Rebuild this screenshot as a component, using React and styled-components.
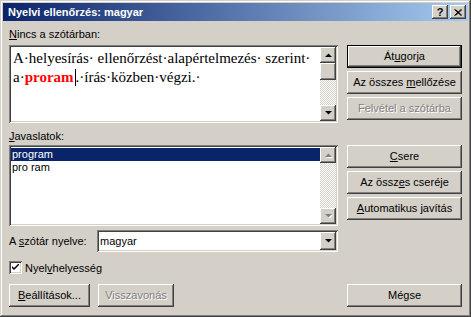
import React from 'react';
import styled, { createGlobalStyle } from 'styled-components';

const face = '#d4d0c8';

const raised = `
  box-shadow: inset -1px -1px #404040, inset 1px 1px #ffffff,
    inset -2px -2px #808080, inset 2px 2px ${face};
`;

const sunken = `
  box-shadow: inset 1px 1px #808080, inset -1px -1px #ffffff,
    inset 2px 2px #404040, inset -2px -2px ${face};
`;

const dither = `
  background-color: ${face};
  background-image: conic-gradient(#ffffff 25%, ${face} 0 50%, #ffffff 0 75%, ${face} 0);
  background-size: 2px 2px;
`;

const GlobalStyle = createGlobalStyle`
  body {
    margin: 0;
    background: ${face};
    font-family: 'Liberation Sans', Arial, sans-serif;
    font-size: 11px;
  }
`;

const Window = styled.div`
  width: 471px;
  height: 317px;
  box-sizing: border-box;
  padding: 3px;
  background: ${face};
  display: flex;
  flex-direction: column;
  box-shadow: inset -1px -1px #404040, inset 1px 1px ${face},
    inset -2px -2px #808080, inset 2px 2px #ffffff;
`;

const TitleBar = styled.div`
  height: 18px;
  display: flex;
  align-items: center;
  padding: 0 2px 0 5px;
  background: linear-gradient(to right, #0a246a, #a6caf0);
`;

const TitleText = styled.div`
  flex: 1;
  color: #ffffff;
  font-weight: bold;
  font-size: 11px;
`;

const CaptionButton = styled.div`
  width: 16px;
  height: 14px;
  margin-left: ${({ gap }) => gap || 0}px;
  display: flex;
  align-items: center;
  justify-content: center;
  background: ${face};
  font-weight: bold;
  font-size: 11px;
  color: #000000;
  ${raised};
`;

const Body = styled.div`
  flex: 1;
  padding: 7px 6px 7px 6px;
  display: flex;
  flex-direction: column;
`;

const Section = styled.div`
  display: flex;
  gap: 9px;
  margin-top: ${({ top }) => top || 0}px;
`;

const LeftColumn = styled.div`
  width: 329px;
  display: flex;
  flex-direction: column;
`;

const ButtonColumn = styled.div`
  width: 115px;
  display: flex;
  flex-direction: column;
  gap: 3px;
  padding-top: ${({ offset }) => offset}px;
`;

const Label = styled.div`
  height: 13px;
  line-height: 13px;
  margin-bottom: ${({ below }) => below}px;
  color: #000000;
  white-space: nowrap;
`;

const Button = styled.div`
  width: ${({ width }) => (width ? `${width}px` : 'auto')};
  height: 23px;
  box-sizing: border-box;
  line-height: 23px;
  text-align: center;
  background: ${face};
  color: ${({ disabled }) => (disabled ? '#808080' : '#000000')};
  text-shadow: ${({ disabled }) => (disabled ? '1px 1px #ffffff' : 'none')};
  white-space: nowrap;
  ${raised};
  ${({ primary }) =>
    primary &&
    `box-shadow: inset 0 0 0 1px #000000, inset -2px -2px #404040, inset 2px 2px #ffffff,
      inset -3px -3px #808080;`}
`;

const TextBox = styled.div`
  height: 78px;
  box-sizing: border-box;
  padding: 2px;
  display: flex;
  background: #ffffff;
  ${sunken};
`;

const Sentence = styled.div`
  flex: 1;
  min-width: 0;
  overflow: hidden;
  padding: 2px 0 0 2px;
  font-family: 'Liberation Serif', 'Times New Roman', serif;
  font-size: 15px;
  line-height: 19px;
  color: #000000;
  white-space: pre;
`;

const Misspelled = styled.span`
  color: #ff0000;
  font-weight: bold;
`;

const Caret = styled.span`
  display: inline-block;
  width: 1px;
  height: 17px;
  margin-left: 1px;
  background: #000000;
  vertical-align: -4px;
`;

const Scrollbar = styled.div`
  width: 16px;
  display: flex;
  flex-direction: column;
`;

const ScrollButton = styled.div`
  width: 16px;
  height: ${({ h }) => h || 16}px;
  display: flex;
  align-items: center;
  justify-content: center;
  background: ${face};
  ${raised};
`;

const Track = styled.div`
  flex: 1;
  ${dither};
`;

const ListBox = styled.div`
  height: 81px;
  box-sizing: border-box;
  padding: 2px;
  display: flex;
  background: #ffffff;
  ${sunken};
`;

const List = styled.div`
  flex: 1;
  padding-top: 1px;
`;

const ListItem = styled.div`
  height: 13px;
  line-height: 13px;
  padding-left: 1px;
  color: ${({ selected }) => (selected ? '#ffffff' : '#000000')};
  background: ${({ selected }) => (selected ? '#0a246a' : 'transparent')};
`;

const FieldRow = styled.div`
  display: flex;
  align-items: center;
  margin-top: ${({ top }) => top}px;
  width: 329px;
`;

const ComboLabel = styled.div`
  width: 88px;
`;

const Combo = styled.div`
  flex: 1;
  height: 22px;
  box-sizing: border-box;
  padding: 2px;
  display: flex;
  background: #ffffff;
  ${sunken};
`;

const ComboValue = styled.div`
  flex: 1;
  padding-left: 1px;
  line-height: 18px;
`;

const CheckRow = styled.div`
  display: flex;
  align-items: center;
  gap: 3px;
  margin-top: 9px;
  height: 13px;
`;

const CheckBox = styled.div`
  width: 13px;
  height: 13px;
  box-sizing: border-box;
  display: flex;
  align-items: center;
  justify-content: center;
  background: #ffffff;
  ${sunken};
`;

const BottomRow = styled.div`
  display: flex;
  gap: 8px;
  margin-top: 10px;
`;

const Spacer = styled.div`
  flex: 1;
`;

const Arrow = ({ down, disabled }) => (
  <svg width="7" height="4" viewBox="0 0 7 4" style={{ overflow: 'visible' }}>
    {disabled && (
      <polygon
        points={down ? '1,1 8,1 4.5,4.5' : '1,5 8,5 4.5,1.5'}
        fill="#ffffff"
      />
    )}
    <polygon
      points={down ? '0,0 7,0 3.5,3.5' : '0,4 7,4 3.5,0.5'}
      fill={disabled ? '#808080' : '#000000'}
    />
  </svg>
);

const Key = ({ children }) => <u>{children}</u>;

export default function App() {
  return (
    <>
      <GlobalStyle />
      <Window>
        <TitleBar>
          <TitleText>Nyelvi ellenőrzés: magyar</TitleText>
          <CaptionButton>?</CaptionButton>
          <CaptionButton gap={2}>
            <svg width="8" height="7" viewBox="0 0 8 7">
              <path d="M0.5 0.5 L7 6.5 M1.5 0.5 L8 6.5 M7 0.5 L0.5 6.5 M8 0.5 L1.5 6.5" stroke="#000" strokeWidth="1" />
            </svg>
          </CaptionButton>
        </TitleBar>
        <Body>
          <Section>
            <LeftColumn>
              <Label below={4}>
                <Key>N</Key>incs a szótárban:
              </Label>
              <TextBox>
                <Sentence>
                  <div>A·helyesírás· ellenőrzést·alapértelmezés· szerint·</div>
                  <div>
                    a·<Misspelled>proram</Misspelled>
                    <Caret />.·írás·közben·végzi.·
                  </div>
                </Sentence>
                <Scrollbar>
                  <ScrollButton>
                    <Arrow />
                  </ScrollButton>
                  <ScrollButton h={17} />
                  <Track />
                  <ScrollButton>
                    <Arrow down />
                  </ScrollButton>
                </Scrollbar>
              </TextBox>
            </LeftColumn>
            <ButtonColumn offset={17}>
              <Button primary>
                Át<Key>u</Key>gorja
              </Button>
              <Button>
                Az összes <Key>m</Key>ellőzése
              </Button>
              <Button disabled>Felvétel a szótárba</Button>
            </ButtonColumn>
          </Section>

          <Section top={7}>
            <LeftColumn>
              <Label below={2}>
                <Key>J</Key>avaslatok:
              </Label>
              <ListBox>
                <List>
                  <ListItem selected>program</ListItem>
                  <ListItem>pro ram</ListItem>
                </List>
                <Scrollbar>
                  <ScrollButton>
                    <Arrow disabled />
                  </ScrollButton>
                  <Track />
                  <ScrollButton>
                    <Arrow down disabled />
                  </ScrollButton>
                </Scrollbar>
              </ListBox>
            </LeftColumn>
            <ButtonColumn offset={15}>
              <Button>
                <Key>C</Key>sere
              </Button>
              <Button>
                Az össz<Key>e</Key>s cseréje
              </Button>
              <Button>
                <Key>A</Key>utomatikus javítás
              </Button>
            </ButtonColumn>
          </Section>

          <FieldRow top={4}>
            <ComboLabel>
              A <Key>s</Key>zótár nyelve:
            </ComboLabel>
            <Combo>
              <ComboValue>magyar</ComboValue>
              <ScrollButton h={18}>
                <Arrow down />
              </ScrollButton>
            </Combo>
          </FieldRow>

          <CheckRow>
            <CheckBox>
              <svg width="7" height="7" viewBox="0 0 7 7">
                <path d="M0 2 L0 4 L2 6 L7 1 L7 -1 L2 4 Z" fill="#000" />
              </svg>
            </CheckBox>
            <span>
              Nyel<Key>v</Key>helyesség
            </span>
          </CheckRow>

          <BottomRow>
            <Button width={81}>
              <Key>B</Key>eállítások...
            </Button>
            <Button width={76} disabled>
              Visszavonás
            </Button>
            <Spacer />
            <Button width={115}>Mégse</Button>
          </BottomRow>
        </Body>
      </Window>
    </>
  );
}
